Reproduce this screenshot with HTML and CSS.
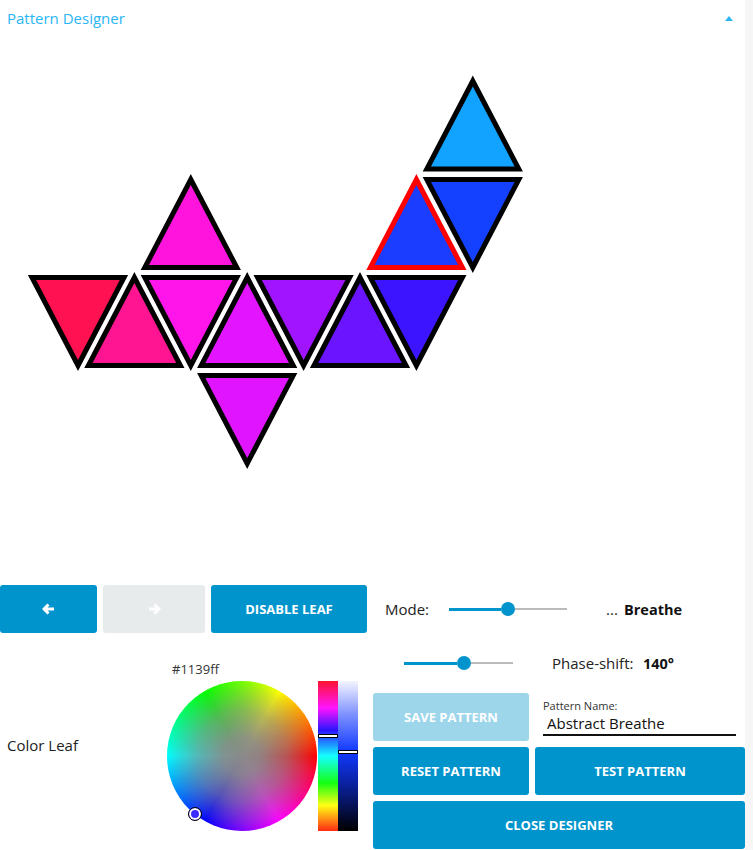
FILE: index.html
```html
<!DOCTYPE html>
<html>
<head>
<meta charset="utf-8">
<link rel="stylesheet" href="styles.css">
</head>
<body>
<div class="page">
  <div class="main">
    <header class="head">
      <span class="title">Pattern Designer</span>
      <span class="caret"></span>
    </header>
    <svg class="canvas" viewBox="0 36 745 549" width="745" height="549">
      <g class="tri" stroke="#000" stroke-width="5" stroke-linejoin="miter" stroke-miterlimit="10">
        <polygon fill="#12a2ff" points="472.8,81 518.8,169 426.8,169"/>
        <polygon fill="#ff14de" points="190.8,179.5 236.8,267.5 144.8,267.5"/>
        <polygon fill="#1441ff" points="426.8,179.5 518.8,179.5 472.8,267.5"/>
        <polygon fill="#ff1152" points="32,277.5 124,277.5 78,365.5"/>
        <polygon fill="#ff1492" points="134.4,277.5 180.4,365.5 88.4,365.5"/>
        <polygon fill="#ff14e9" points="144.8,277.5 236.8,277.5 190.8,365.5"/>
        <polygon fill="#e314ff" points="247.2,277.5 293.2,365.5 201.2,365.5"/>
        <polygon fill="#a114ff" points="257.6,277.5 349.6,277.5 303.6,365.5"/>
        <polygon fill="#6b14ff" points="360,277.5 406,365.5 314,365.5"/>
        <polygon fill="#3d14ff" points="370.4,277.5 462.4,277.5 416.4,365.5"/>
        <polygon fill="#e014ff" points="201.2,375.5 293.2,375.5 247.2,463.5"/>
        <polygon fill="#1a3dff" stroke="#ff0000" points="416.4,179.5 462.4,267.5 370.4,267.5"/>
      </g>
    </svg>
    <div class="controls">
      <div class="left">
        <div class="nav">
          <button class="btn nav-btn">
            <svg width="13" height="12" viewBox="0 0 13 12"><path d="M6.5 1.5 L2 6 L6.5 10.5 M2.5 6 H12" fill="none" stroke="#fff" stroke-width="3" stroke-linejoin="miter"/></svg>
          </button>
          <button class="btn nav-btn nav-next is-disabled">
            <svg width="13" height="12" viewBox="0 0 13 12"><path d="M6.5 1.5 L11 6 L6.5 10.5 M10.5 6 H1" fill="none" stroke="#fff" stroke-width="3" stroke-linejoin="miter"/></svg>
          </button>
          <button class="btn nav-wide">Disable Leaf</button>
        </div>
        <div class="color">
          <div class="color-label">Color Leaf</div>
          <div class="picker">
            <div class="hex">#1139ff</div>
            <div class="picker-body">
              <div class="wheel"><span class="wheel-marker"></span></div>
              <div class="bar hue"><span class="mark mark-hue"></span></div>
              <div class="bar value"><span class="mark mark-value"></span></div>
            </div>
          </div>
        </div>
      </div>
      <div class="right">
        <div class="mode-row">
          <span class="mode-label">Mode:</span>
          <div class="slider mode-slider">
            <span class="fill" style="width:52px"></span>
            <span class="thumb"></span>
            <span class="rest"></span>
          </div>
          <span class="dots">...</span>
          <strong class="val">Breathe</strong>
        </div>
        <div class="phase-row">
          <div class="slider phase-slider">
            <span class="fill" style="width:53px"></span>
            <span class="thumb"></span>
            <span class="rest"></span>
          </div>
          <span class="phase-label">Phase-shift:</span>
          <strong class="val">140°</strong>
        </div>
        <div class="actions">
          <button class="btn is-light">Save Pattern</button>
          <div class="field">
            <div class="field-label">Pattern Name:</div>
            <div class="field-input">Abstract Breathe</div>
          </div>
          <button class="btn">Reset Pattern</button>
          <button class="btn">Test Pattern</button>
          <button class="btn span2">Close Designer</button>
        </div>
      </div>
    </div>
  </div>
  <div class="scroll"></div>
</div>
</body>
</html>
```
FILE: styles.css
```css
* { box-sizing: border-box; }
body {
  margin: 0;
  font-family: "Open Sans", "Noto Sans", "Liberation Sans", sans-serif;
  color: #222;
  background: #fff;
}
.page {
  display: flex;
  width: 753px;
  height: 850px;
  overflow: hidden;
}
.main { width: 745px; }
.scroll { width: 8px; background: #f6f6f6; }

.head {
  height: 36px;
  display: flex;
  align-items: center;
  justify-content: space-between;
  padding: 0 12px 0 7px;
}
.title {
  font-size: 15px;
  font-weight: 500;
  color: #29b6f6;
}
.caret {
  width: 0;
  height: 0;
  border-left: 4.5px solid transparent;
  border-right: 4.5px solid transparent;
  border-bottom: 5px solid #29b6f6;
}
.canvas { display: block; }

.controls {
  display: grid;
  grid-template-columns: 367px 372px;
  column-gap: 6px;
}
.btn {
  border: 0;
  border-radius: 3px;
  background: #0094cc;
  color: #fff;
  font-family: inherit;
  font-weight: 700;
  font-size: 13px;
  text-transform: uppercase;
  display: flex;
  align-items: center;
  justify-content: center;
  padding: 0;
  margin: 0;
}
.btn.is-light { background: #9dd5eb; }
.btn.is-disabled { background: #e8ebec; }
.nav {
  display: flex;
  gap: 6px;
  height: 48px;
}
.nav-btn { width: 97px; }
.nav-next { width: 102px; }
.nav-wide { width: 156px; }

.color {
  display: flex;
  height: 210px;
  margin-top: 6px;
}
.color-label {
  width: 167px;
  padding-left: 7px;
  align-self: center;
  font-size: 15px;
  line-height: 20px;
  margin-top: 2px;
}
.picker { padding-top: 21px; }
.hex {
  font-size: 13px;
  line-height: 18px;
  padding-left: 5px;
  color: #333;
}
.picker-body {
  display: flex;
  margin-top: 3px;
}
.wheel {
  position: relative;
  width: 150px;
  height: 150px;
  border-radius: 50%;
  background:
    radial-gradient(closest-side, #8a8a8a 0%, rgba(138,138,138,0.92) 25%, rgba(138,138,138,0.6) 60%, rgba(138,138,138,0.2) 88%, rgba(138,138,138,0) 100%),
    conic-gradient(#70ff00, #ffff00 30deg, #ff8000 60deg, #ff0000 90deg, #ff0080 120deg, #ff00ff 150deg, #8000ff 180deg, #0000ff 210deg, #0080ff 240deg, #00ffff 270deg, #00ff80 300deg, #00ff00 330deg, #70ff00 360deg);
  margin-right: 1px;
}
.wheel-marker {
  position: absolute;
  left: 21px;
  top: 126px;
  width: 14px;
  height: 14px;
  border-radius: 50%;
  border: 1.5px solid #000;
  background: #3a2cff;
  box-shadow: inset 0 0 0 2px #fff;
}
.bar {
  position: relative;
  width: 20px;
  height: 150px;
}
.hue {
  background: linear-gradient(#ff1430, #ff14ff 18%, #2a14ff 33%, #14ffff 50%, #14ff14 68%, #ffff14 83%, #ff2a14);
}
.value {
  background: linear-gradient(#f4f5ff 0%, #7f92ff 22%, #1139ff 47%, #0a2099 70%, #000 100%);
}
.mark {
  position: absolute;
  left: 0;
  right: 0;
  height: 4px;
  background: #fff;
  border: 1px solid #000;
}
.mark-hue { top: 53px; }
.mark-value { top: 69px; }

.mode-row {
  height: 48px;
  display: flex;
  align-items: center;
  padding-left: 12px;
  font-size: 15px;
}
.mode-label { width: 64px; }
.slider {
  display: flex;
  align-items: center;
  height: 14px;
}
.mode-slider { width: 118px; }
.phase-slider { width: 109px; }
.fill { height: 3px; background: #0094cc; }
.thumb {
  width: 14px;
  height: 14px;
  border-radius: 50%;
  background: #0094cc;
  flex: none;
}
.rest { flex: 1; height: 2px; background: #bbb; }
.dots { margin-left: 39px; width: 18px; }
.val { font-weight: 700; font-size: 14.5px; color: #111; }

.phase-row {
  height: 48px;
  margin-top: 6px;
  display: flex;
  align-items: center;
  padding-left: 31px;
  font-size: 15px;
}
.phase-label { margin-left: 39px; width: 91px; }

.actions {
  display: grid;
  grid-template-columns: 156px 210px;
  grid-auto-rows: 48px;
  gap: 6px;
  margin-top: 6px;
}
.span2 { grid-column: 1 / 3; }
.field { padding: 6px 0 0 8px; }
.field-label {
  font-size: 11px;
  line-height: 14px;
  color: #333;
}
.field-input {
  width: 193px;
  font-size: 15px;
  line-height: 20px;
  padding-left: 4px;
  border-bottom: 2px solid #111;
  padding-bottom: 1px;
  color: #111;
}
```
